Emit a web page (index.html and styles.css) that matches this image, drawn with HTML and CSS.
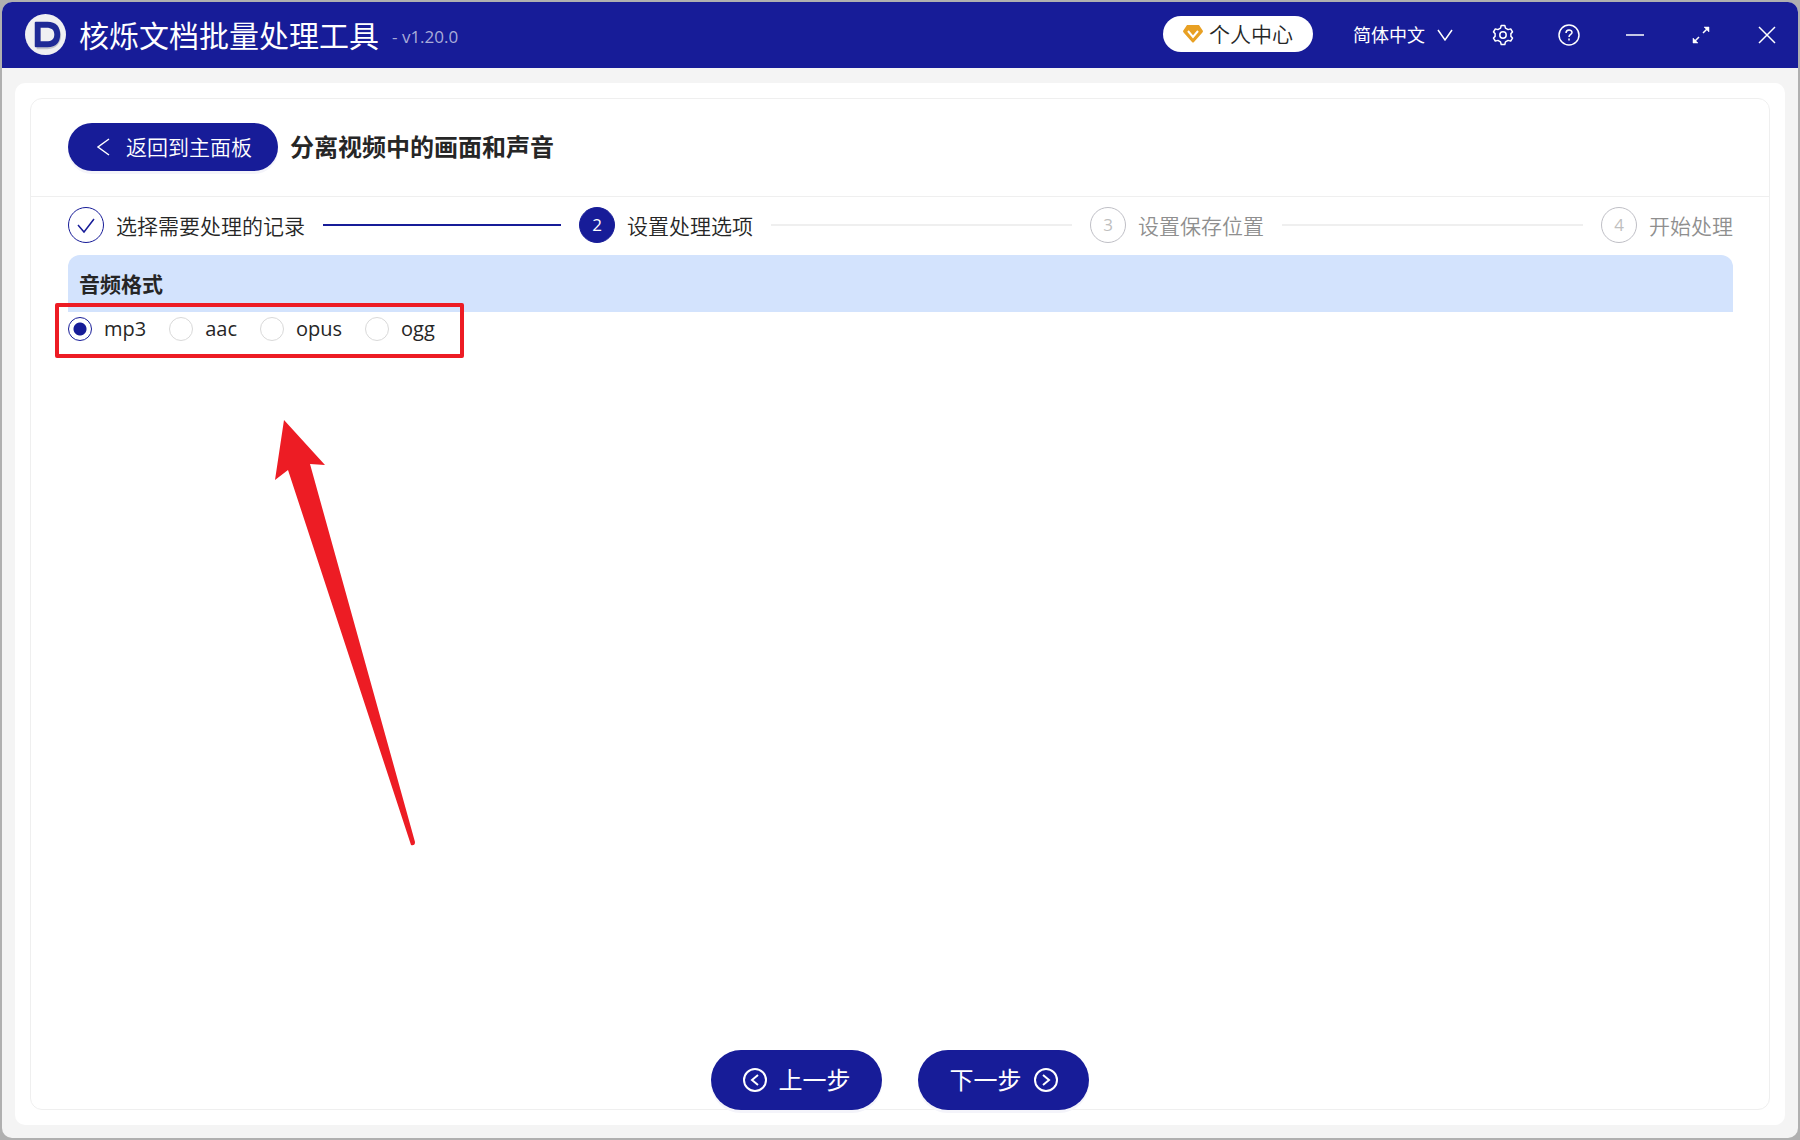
FILE: index.html
```html
<!DOCTYPE html>
<html lang="zh-CN">
<head>
<meta charset="utf-8">
<title>核烁文档批量处理工具</title>
<link rel="stylesheet" href="styles.css">
</head>
<body>
<div class="window">
  <header class="titlebar">
    <svg class="logo" viewBox="0 0 42 42" aria-hidden="true">
      <circle cx="21" cy="21" r="21" fill="#f0f0f2"/>
      <path d="M12 11h11c9 0 14 4 14 11s-5 14-14 14H12z" fill="#c3c4cc"/>
      <path d="M11 8h12c9 0 13 5 13 13s-4 13-13 13H11q-1 0-1-1V9q0-1 1-1z" fill="#1f2a96"/>
      <path d="M16 14h6c5 0 8 2 8 7s-3 7-8 7h-6z" fill="#f0f0f2"/>
    </svg>
    <h1 class="app-name">核烁文档批量处理工具</h1>
    <span class="version">- v1.20.0</span>
    <button class="account" type="button">
      <svg class="gem" viewBox="0 0 20 20" aria-hidden="true">
        <path d="M4 1h12l4 6q0 1-1 2l-8 9q-1 1-2 0L1 9Q0 8 0 7z" fill="#e8a023"/>
        <path d="M5 7l5 6 5-6" fill="none" stroke="#fff" stroke-width="2"/>
      </svg>
      <span>个人中心</span>
    </button>
    <button class="language" type="button">
      <span>简体中文</span>
      <svg class="chevron" viewBox="0 0 16 16" aria-hidden="true"><path d="M1 3l7 10 7-10"/></svg>
    </button>
    <nav class="tools" aria-label="窗口">
      <button class="tool" type="button" aria-label="设置">
        <svg viewBox="0 0 24 24"><path d="M10.2 2.5h3.6l.7 2.6 2.6 1.5 2.6-.7 1.8 3.1-1.6 1.6v2.8l1.6 1.6-1.8 3.1-2.6-.7-2.6 1.5-.7 2.600h-3.600l-.7-2.600-2.600-1.500-2.600.7L2.500 15l1.600-1.600v-2.800L2.500 9l1.800-3.100 2.600.7 2.600-1.500z" stroke-linejoin="round"/><circle cx="12" cy="12" r="3.200"/></svg>
      </button>
      <button class="tool" type="button" aria-label="帮助">
        <svg viewBox="0 0 24 24"><circle cx="12" cy="12" r="10"/><path d="M9 10c0-4 6-4 6-.5 0 2-3 2-3 4.500M12 15.500v2"/></svg>
      </button>
      <button class="tool" type="button" aria-label="最小化">
        <svg viewBox="0 0 24 24"><path d="M3 12h18"/></svg>
      </button>
      <button class="tool" type="button" aria-label="最大化">
        <svg viewBox="0 0 24 24"><path d="M14 10l5-5M10 14l-5 5"/><path d="M15 4h5v5zM4 15v5h5z" fill="#fff" stroke-width=".5"/></svg>
      </button>
      <button class="tool" type="button" aria-label="关闭">
        <svg viewBox="0 0 24 24"><path d="M4 4l16 16M20 4L4 20"/></svg>
      </button>
    </nav>
  </header>
  <main class="page">
    <section class="panel">
      <div class="panel-head">
        <button class="back" type="button">
          <svg class="back-icon" viewBox="0 0 20 20" aria-hidden="true"><path d="M15 2L4 10l11 8"/></svg>
          <span>返回到主面板</span>
        </button>
        <h2 class="task">分离视频中的画面和声音</h2>
      </div>
      <div class="panel-body">
        <ol class="steps">
          <li class="step done">
            <span class="badge"><svg class="tick" viewBox="0 0 20 20"><path d="M2 10l6 7L18 4"/></svg></span>
            <span class="step-name">选择需要处理的记录</span>
          </li>
          <li class="step current"><span class="badge">2</span><span class="step-name">设置处理选项</span></li>
          <li class="step"><span class="badge">3</span><span class="step-name">设置保存位置</span></li>
          <li class="step"><span class="badge">4</span><span class="step-name">开始处理</span></li>
        </ol>
        <h3 class="group-title" id="format-title">音频格式</h3>
        <div class="formats" role="radiogroup" aria-labelledby="format-title">
          <label class="format"><input type="radio" name="format" checked><span>mp3</span></label>
          <label class="format"><input type="radio" name="format"><span>aac</span></label>
          <label class="format"><input type="radio" name="format"><span>opus</span></label>
          <label class="format"><input type="radio" name="format"><span>ogg</span></label>
          <div class="mark-box"></div>
          <svg class="mark-arrow" viewBox="0 0 144 428" aria-hidden="true"><path d="M10 1l41 45-15-1 105 378q0 4-4 3L14 51 1 61z" fill="#ed1c24"/></svg>
        </div>
      </div>
      <footer class="actions">
        <button class="action" type="button">
          <svg class="action-icon" viewBox="0 0 24 24"><circle cx="12" cy="12" r="11"/><path d="M15 7l-6 5 6 5"/></svg>
          <span>上一步</span>
        </button>
        <button class="action" type="button">
          <span>下一步</span>
          <svg class="action-icon" viewBox="0 0 24 24"><circle cx="12" cy="12" r="11"/><path d="M9 7l6 5-6 5"/></svg>
        </button>
      </footer>
    </section>
  </main>
</div>
</body>
</html>
```
FILE: styles.css
```css
* { box-sizing: border-box; }

body {
  margin: 0;
  min-height: 100vh;
  padding: 2px;
  display: flex;
  background: #b0b0b0;
  color: #262626;
  font: 350 21px/32px "Open Sans", "Noto Sans CJK SC", sans-serif;
}

h1, h2, h3, ol { margin: 0; padding: 0; }

button {
  border: 0;
  padding: 0;
  background: none;
  color: inherit;
  font: inherit;
  display: flex;
  align-items: center;
  justify-content: center;
  white-space: nowrap;
  cursor: pointer;
}

svg { flex: none; display: block; }

.window {
  flex: 1;
  display: flex;
  flex-direction: column;
  border-radius: 10px;
  overflow: hidden;
  background: #f4f4f4;
}

.titlebar {
  height: 66px;
  padding: 0 0 2px 23px;
  display: flex;
  align-items: center;
  background: #171c98;
  color: #fff;
}

.logo { width: 41px; height: 41px; margin-right: 13px; }
.app-name { padding-top: 3px; font-size: 30px; font-weight: 400; line-height: 40px; }
.version { margin-left: 13px; padding-top: 5px; font-size: 17px; color: #a9acd9; font-weight: 400; }

.account {
  width: 150px;
  height: 36px;
  margin-left: auto;
  gap: 6px;
  border-radius: 18px;
  background: #fff;
  color: #262626;
}
.gem { width: 20px; height: 20px; }

.language { margin-left: 40px; padding-top: 2px; gap: 12px; font-size: 18px; font-weight: 400; }
.chevron { width: 16px; height: 16px; fill: none; stroke: #fff; stroke-width: 1.5; }

.tools { display: flex; margin: 0 -2px 0 17px; }
.tool { width: 66px; height: 64px; padding-top: 1px; }
.tool svg { width: 24px; height: 24px; fill: none; stroke: #fff; stroke-width: 1.5; }

.page {
  flex: 1;
  display: flex;
  margin: 15px 13px 13px;
  padding: 15px;
  border-radius: 10px;
  background: #fff;
}

.panel {
  flex: 1;
  display: flex;
  flex-direction: column;
  border: 1px solid #efefef;
  border-radius: 12px;
}

.panel-head {
  padding: 24px 37px 25px;
  display: flex;
  align-items: center;
  gap: 12px;
  border-bottom: 1px solid #efefef;
}

.back {
  width: 210px;
  height: 48px;
  gap: 12px;
  border-radius: 24px;
  background: #171c98;
  color: #fff;
  box-shadow: 0 3px 0 #f4f4fa;
}
.back-icon { width: 20px; height: 20px; fill: none; stroke: #fff; stroke-width: 1.5; }
.task { font-size: 24px; font-weight: 700; }

.panel-body { flex: 1; padding: 10px 36px 0 37px; }

.steps { display: flex; list-style: none; gap: 18px; }
.step { flex: 1; display: flex; align-items: center; color: #8f8f8f; white-space: nowrap; }
.step:last-child { flex: none; }
.step-name { padding-top: 2px; }
.step:not(:last-child)::after {
  content: "";
  flex: 1;
  height: 2px;
  margin-left: 18px;
  background: #efefef;
}
.badge {
  width: 36px;
  height: 36px;
  margin-right: 12px;
  display: flex;
  align-items: center;
  justify-content: center;
  border: 1px solid #bfbfc6;
  border-radius: 50%;
  color: #bfbfbf;
  font-size: 17px;
  font-weight: 400;
}
.done, .current { color: #262626; }
.done .badge { border-color: #171c98; }
.step.done:not(:last-child)::after { background: #171c98; }
.current .badge { border-color: #171c98; background: #171c98; color: #fff; }
.tick { width: 20px; height: 20px; fill: none; stroke: #171c98; stroke-width: 1.5; }

.group-title {
  margin-top: 12px;
  padding: 13px 11px 12px;
  border-radius: 12px 12px 0 0;
  background: #d3e3fd;
  font-size: 21px;
  font-weight: 700;
}

.formats { position: relative; display: flex; gap: 23px; padding-top: 1px; }
.format { display: flex; align-items: center; gap: 12px; font-size: 20px; font-weight: 400; cursor: pointer; }
.format input {
  appearance: none;
  width: 24px;
  height: 24px;
  margin: 0;
  border: 1px solid #d9d9d9;
  border-radius: 50%;
  background: #fff;
}
.format input:checked {
  border-color: #171c98;
  background: radial-gradient(circle, #171c98 6px, #fff 7px);
}

.mark-box {
  position: absolute;
  left: -13px;
  top: -9px;
  width: 409px;
  height: 55px;
  border: 4px solid #ed1c24;
  border-radius: 2px;
  pointer-events: none;
}
.mark-arrow { position: absolute; left: 206px; top: 107px; width: 144px; height: 428px; }

.actions { display: flex; justify-content: center; gap: 36px; margin-bottom: -1px; }
.action {
  width: 171px;
  height: 60px;
  gap: 12px;
  border-radius: 30px;
  background: #171c98;
  color: #fff;
  font-size: 24px;
  font-weight: 400;
  box-shadow: 0 3px 0 #f4f4fa;
}
.action-icon { width: 24px; height: 24px; fill: none; stroke: #fff; stroke-width: 2; }
```
